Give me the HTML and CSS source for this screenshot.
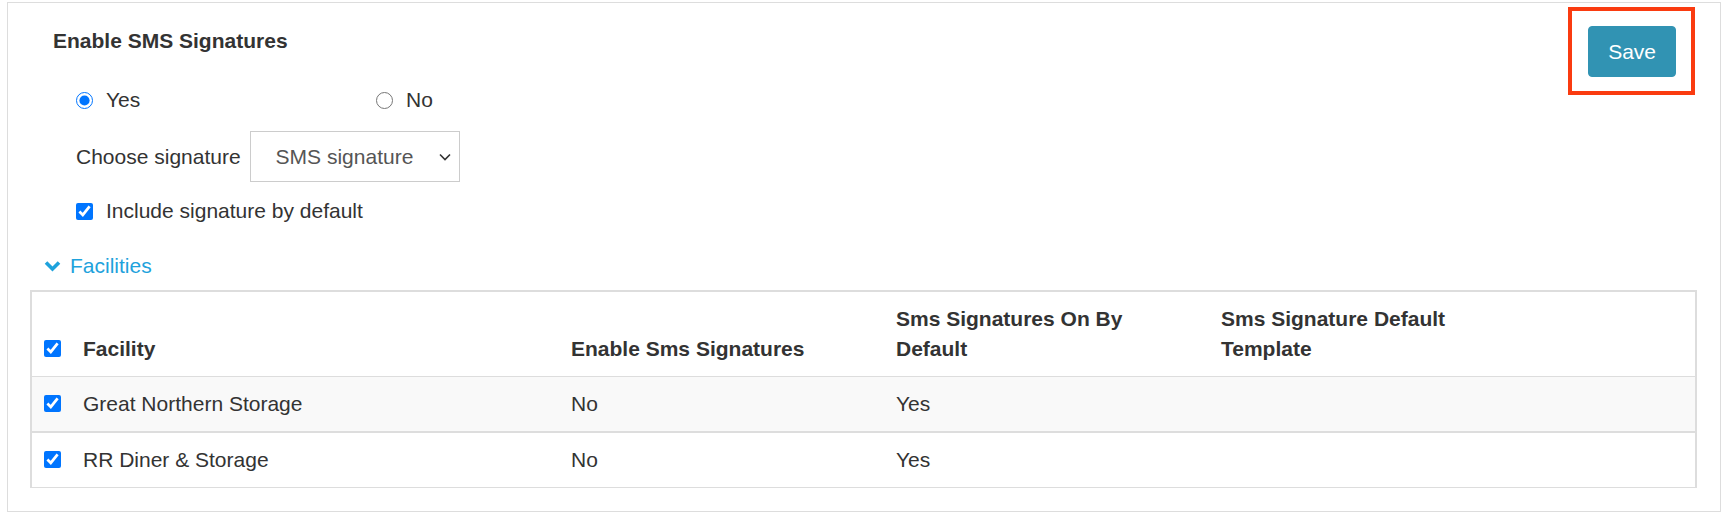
FILE: index.html
```html
<!DOCTYPE html>
<html lang="en">
<head>
  <meta charset="UTF-8">
  <meta name="viewport" content="width=device-width, initial-scale=1.0">
  <title>SMS Signatures</title>
  <link rel="stylesheet" href="styles.css">
</head>
<body>
  <div class="panel">
    <div class="top">
      <div class="settings">
        <h2>Enable SMS Signatures</h2>

        <div class="radios">
          <label class="option"><input type="radio" name="enable" checked> Yes</label>
          <label class="option"><input type="radio" name="enable"> No</label>
        </div>

        <div class="sig-row">
          <label for="signature">Choose signature</label>
          <div class="select-wrap">
            <select id="signature">
              <option>SMS signature</option>
            </select>
            <svg class="caret" width="12" height="8" viewBox="0 0 12 8">
              <polyline points="1,1.5 6,6.5 11,1.5" fill="none" stroke="#333" stroke-width="1.6"/>
            </svg>
          </div>
        </div>

        <label class="check-row"><input type="checkbox" checked> Include signature by default</label>
      </div>

      <span class="highlight">
        <button type="button" class="btn-save">Save</button>
      </span>
    </div>

    <a href="#" class="toggle">
      <svg width="17" height="12" viewBox="0 0 17 12">
        <polyline points="2,2.5 8.5,9 15,2.5" fill="none" stroke="currentColor" stroke-width="3.6"/>
      </svg>
      Facilities
    </a>

    <table class="facilities">
      <colgroup>
        <col class="c-check">
        <col class="c-name">
        <col class="c-mid">
        <col class="c-mid">
        <col class="c-mid">
        <col>
      </colgroup>
      <thead>
        <tr>
          <th class="col-check"><input type="checkbox" checked></th>
          <th>Facility</th>
          <th>Enable Sms Signatures</th>
          <th>Sms Signatures On By Default</th>
          <th>Sms Signature Default Template</th>
          <th></th>
        </tr>
      </thead>
      <tbody>
        <tr class="striped">
          <td class="col-check"><input type="checkbox" checked></td>
          <td>Great Northern Storage</td>
          <td>No</td>
          <td>Yes</td>
          <td></td>
          <td></td>
        </tr>
        <tr>
          <td class="col-check"><input type="checkbox" checked></td>
          <td>RR Diner &amp; Storage</td>
          <td>No</td>
          <td>Yes</td>
          <td></td>
          <td></td>
        </tr>
      </tbody>
    </table>
  </div>
</body>
</html>
```

FILE: styles.css
```css
body {
  margin: 0;
  font-family: "Liberation Sans", Arial, sans-serif;
  font-size: 21px;
  line-height: 30px;
  color: #333;
  background-color: #fff;
}

.panel {
  box-sizing: border-box;
  width: 1714px;
  height: 510px;
  margin: 2px 0 0 7px;
  padding: 23px 22px 0 22px;
  border: 1px solid #ddd;
}

.top {
  display: flex;
  justify-content: space-between;
  align-items: flex-start;
  padding: 0 22px 0 23px;
}

h2 {
  margin: 0;
  font-size: 21px;
  font-weight: bold;
  line-height: 30px;
}

.radios {
  display: flex;
  margin: 29px 0 0 23px;
}

.option {
  display: flex;
  align-items: center;
  width: 300px;
  height: 30px;
}

input[type="radio"],
input[type="checkbox"] {
  width: 17px;
  height: 17px;
  margin: 0 13px 0 0;
  accent-color: #0075ff;
}

.sig-row {
  display: flex;
  align-items: center;
  margin: 16px 0 0 23px;
}

.sig-row label {
  margin-right: 9px;
}

.select-wrap {
  position: relative;
}

select {
  appearance: none;
  box-sizing: border-box;
  width: 210px;
  height: 51px;
  padding: 0 0 0 25px;
  border: 1px solid #ccc;
  border-radius: 0;
  background-color: #fff;
  font-family: inherit;
  font-size: 21px;
  color: #555;
}

.caret {
  position: absolute;
  right: 9px;
  top: 22px;
}

.check-row {
  display: flex;
  align-items: center;
  height: 30px;
  margin: 14px 0 0 23px;
}

.btn-save {
  padding: 10px 19px;
  border: 1px solid #3193b3;
  border-radius: 4px;
  background-color: #3193b3; /* teal button */
  color: #fff;
  font-family: inherit;
  font-size: 21px;
  line-height: 29px;
  cursor: pointer;
}

/* red annotation box round the save button */
.highlight {
  position: relative;
  display: inline-block;
}

.highlight::after {
  content: "";
  position: absolute;
  top: -19px;
  right: -19px;
  bottom: -18px;
  left: -20px;
  border: 4px solid #fa3b10;
}

.toggle {
  display: flex;
  align-items: center;
  margin: 25px 0 0 14px;
  color: #1ea2dc;
  text-decoration: none;
}

.toggle svg {
  margin-right: 9px;
}

table.facilities {
  table-layout: fixed;
  width: 1667px;
  margin-top: 9px;
  border-collapse: separate;
  border-spacing: 0;
  border: 2px solid #ddd;
  border-bottom-width: 1px;
}

.c-check { width: 39px; }
.c-name { width: 488px; }
.c-mid { width: 325px; }

th,
td {
  padding: 12px;
  text-align: left;
  line-height: 30px;
}

th {
  vertical-align: bottom;
  font-weight: bold;
  border-bottom: 1px solid #ddd;
}

td {
  vertical-align: top;
}

tbody tr + tr td {
  border-top: 2px solid #ddd;
}

.striped td {
  background-color: #f9f9f9;
}

.col-check {
  padding-right: 10px;
}

.col-check input {
  display: block;
  margin: 6px 0 7px;
}
```
